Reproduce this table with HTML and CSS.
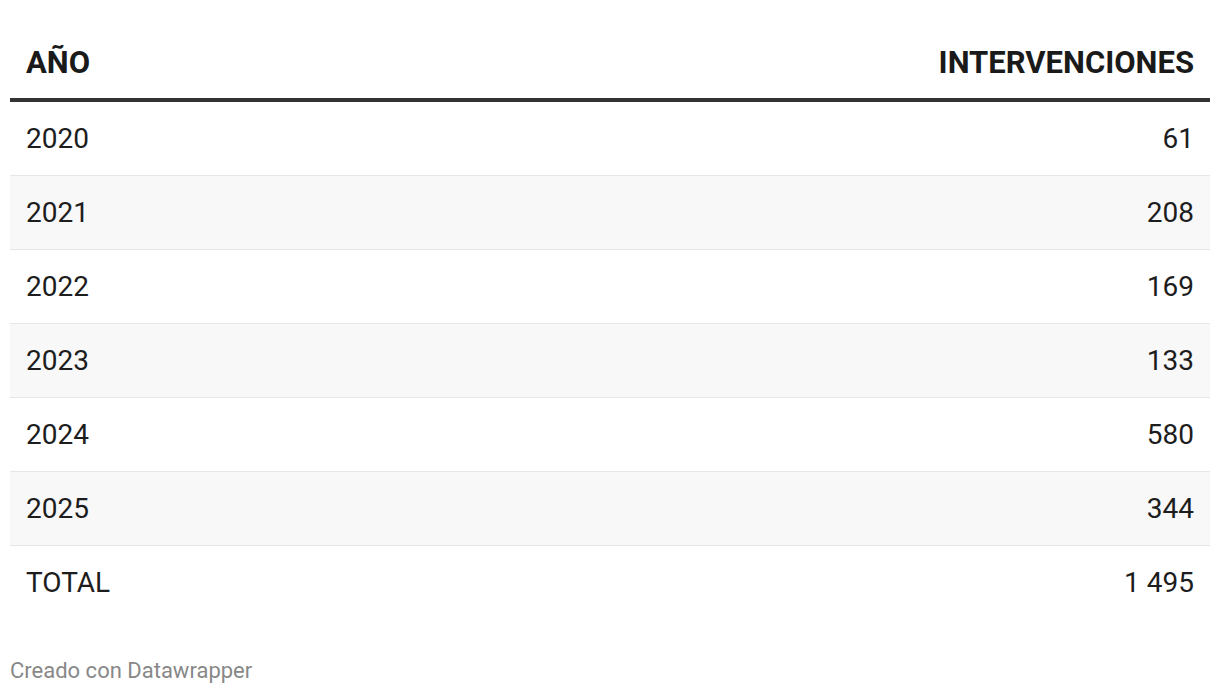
FILE: index.html
```html
<!DOCTYPE html>
<html lang="es">
<head>
<meta charset="utf-8">
<link rel="stylesheet" href="styles.css">
</head>
<body>
<div class="wrap">
  <table class="tbl">
    <thead>
      <tr><th class="left">AÑO</th><th class="right">INTERVENCIONES</th></tr>
    </thead>
    <tbody>
      <tr><td>2020</td><td class="right">61</td></tr>
      <tr class="alt"><td>2021</td><td class="right">208</td></tr>
      <tr><td>2022</td><td class="right">169</td></tr>
      <tr class="alt"><td>2023</td><td class="right">133</td></tr>
      <tr><td>2024</td><td class="right">580</td></tr>
      <tr class="alt"><td>2025</td><td class="right">344</td></tr>
      <tr class="last"><td>TOTAL</td><td class="right">1 495</td></tr>
    </tbody>
  </table>
  <div class="footer">Creado con Datawrapper</div>
</div>
</body>
</html>
```
FILE: styles.css
```css
html, body { margin: 0; padding: 0; background: #fff; }
body { font-family: Roboto, "Noto Sans", sans-serif; color: #1d1d1d; }
.wrap { padding: 28px 10px 0 10px; }
.tbl { width: 1200px; border-collapse: collapse; }
.tbl th {
  font-size: 31px; font-weight: 700; line-height: 34px;
  padding: 18px 16px 18px 16px; border-bottom: 4px solid #333; color: #1a1a1a;
}
.tbl td {
  font-size: 28px; line-height: 30px; padding: 22px 16px 21px 16px;
  border-bottom: 1px solid #e6e6e6;
}
.tbl tr.last td { border-bottom: none; }
.tbl tr.alt td { background: #f8f8f8; }
.left { text-align: left; }
.right { text-align: right; }
.footer { margin-top: 39px; font-size: 22px; line-height: 26px; color: #888; }
```
